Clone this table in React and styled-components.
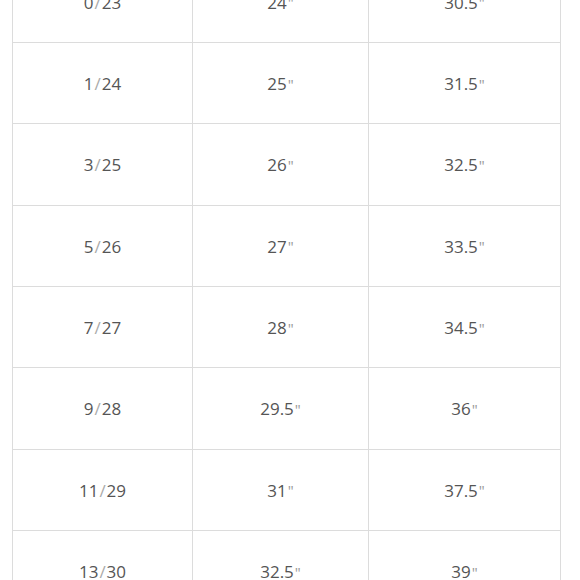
import React from "react";
import styled, { createGlobalStyle } from "styled-components";

const Global = createGlobalStyle`
  html, body { margin: 0; padding: 0; background: #fff; }
  body { overflow: hidden; height: 580px; }
`;

const Page = styled.div`
  width: 580px;
  height: 580px;
  overflow: hidden;
  background: #fff;
`;

const Table = styled.div`
  margin: -38.33px 0 0 12px;
  display: grid;
  grid-template-columns: 180px 176px 192px;
  grid-auto-rows: 81.33px;
  width: max-content;
  border-left: 1px solid #dcdcdc;
`;

const Cell = styled.div`
  box-sizing: border-box;
  display: flex;
  align-items: center;
  justify-content: center;
  border-right: 1px solid #dcdcdc;
  border-bottom: 1px solid #dcdcdc;
  font-family: "Open Sans", "Noto Sans", sans-serif;
  font-size: 17px;
  color: #555;
  padding-top: 1px;
  white-space: pre;
`;

const Slash = styled.span`
  color: #aaa;
  margin: 0 1px;
`;

const Quote = styled.span`
  color: #999;
  font-size: 15px;
  margin-left: 1px;
`;

const rows = [
  ["0", "23", "24", "30.5"],
  ["1", "24", "25", "31.5"],
  ["3", "25", "26", "32.5"],
  ["5", "26", "27", "33.5"],
  ["7", "27", "28", "34.5"],
  ["9", "28", "29.5", "36"],
  ["11", "29", "31", "37.5"],
  ["13", "30", "32.5", "39"],
];

function Inch({ v }) {
  return (
    <Cell>
      {v}
      <Quote>"</Quote>
    </Cell>
  );
}

export default function App() {
  return (
    <Page>
      <Global />
      <Table>
        {rows.map(([a, b, c, d]) => (
          <React.Fragment key={a}>
            <Cell>
              {a}
              <Slash>/</Slash>
              {b}
            </Cell>
            <Inch v={c} />
            <Inch v={d} />
          </React.Fragment>
        ))}
      </Table>
    </Page>
  );
}
